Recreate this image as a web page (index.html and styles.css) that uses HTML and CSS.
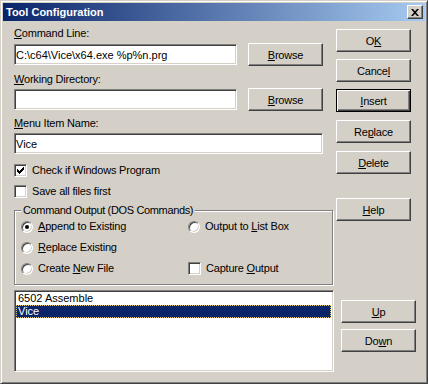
FILE: index.html
```html
<!DOCTYPE html>
<html lang="en">
<head>
    <meta charset="UTF-8">
    <title>Tool Configuration</title>
    <link rel="stylesheet" href="styles.css">
</head>
<body>
    <div class="window">
        <div class="titlebar">
            <span class="title">Tool Configuration</span>
            <button class="close-btn" title="Close">
                <svg width="8" height="7" viewBox="0 0 8 7"><path d="M0 0H2L4 2.3 6 0H8L5 3.5 8 7H6L4 4.7 2 7H0L3 3.5Z" fill="#000"/></svg>
            </button>
        </div>

        <div class="client">
            <div class="left">
                <div class="label label-first"><u>C</u>ommand Line:</div>
                <div class="field-row">
                    <input type="text" class="textbox short" value="C:\c64\Vice\x64.exe %p%n.prg">
                    <button class="btn"><u>B</u>rowse</button>
                </div>

                <div class="label label-second"><u>W</u>orking Directory:</div>
                <div class="field-row row-tight">
                    <input type="text" class="textbox short" value="">
                    <button class="btn"><u>B</u>rowse</button>
                </div>

                <div class="label label-third"><u>M</u>enu Item Name:</div>
                <input type="text" class="textbox long" value="Vice">

                <div class="check-row check-first">
                    <span class="checkbox checked">
                        <svg width="7" height="7" viewBox="0 0 7 7"><path d="M0 2H1V3H2V4H3V3H4V2H5V1H6V0H7V3H6V4H5V5H4V6H3V7H2V6H1V5H0Z" fill="#000"/></svg>
                    </span>
                    <span>Check if Windows Program</span>
                </div>
                <div class="check-row check-second">
                    <span class="checkbox"></span>
                    <span>Save all files first</span>
                </div>

                <div class="group">
                    <div class="group-title">Command Output (DOS Commands)</div>
                    <div class="group-grid">
                        <div class="option"><span class="radio on"></span><span><u>A</u>ppend to Existing</span></div>
                        <div class="option"><span class="radio"></span><span>Output to <u>L</u>ist Box</span></div>
                        <div class="option"><span class="radio"></span><span><u>R</u>eplace Existing</span></div>
                        <div class="option"></div>
                        <div class="option"><span class="radio"></span><span>Create <u>N</u>ew File</span></div>
                        <div class="option"><span class="checkbox"></span><span>Capture <u>O</u>utput</span></div>
                    </div>
                </div>

                <div class="listbox">
                    <div class="list-item">6502 Assemble</div>
                    <div class="list-item selected">Vice</div>
                </div>
            </div>

            <div class="right">
                <button class="btn btn-ok">O<u>K</u></button>
                <button class="btn btn-cancel">Cance<u>l</u></button>
                <button class="btn btn-default btn-insert"><u>I</u>nsert</button>
                <button class="btn btn-replace">Re<u>p</u>lace</button>
                <button class="btn btn-delete"><u>D</u>elete</button>
                <button class="btn btn-help"><u>H</u>elp</button>
                <button class="btn btn-up btn-shift"><u>U</u>p</button>
                <button class="btn btn-down btn-shift">Do<u>w</u>n</button>
            </div>
        </div>
    </div>
</body>
</html>
```

FILE: styles.css
```css
body {
    margin: 0;
    font-family: "Liberation Sans", Arial, sans-serif;
    font-size: 11px;
    letter-spacing: -0.2px;
    color: #000;
}

.window {
    width: 428px;
    height: 384px;
    box-sizing: border-box;
    border: 1px solid;
    border-color: #d4d0c8 #404040 #404040 #d4d0c8;
    box-shadow: inset 1px 1px #fff, inset -1px -1px #808080;
    padding: 2px;
    background-color: #d4d0c8;
}

.titlebar {
    height: 18px;
    display: flex;
    align-items: center;
    justify-content: space-between;
    padding-left: 3px;
    background: linear-gradient(to right, #0a246a, #a6caf0);
}

.title {
    color: #fff;
    font-weight: bold;
    font-size: 11px;
    line-height: 13px;
    letter-spacing: 0;
}

.close-btn {
    width: 16px;
    height: 14px;
    margin-right: 2px;
    padding: 0;
    display: flex;
    align-items: center;
    justify-content: center;
    box-sizing: border-box;
    background-color: #d4d0c8;
    border: 1px solid;
    border-color: #fff #404040 #404040 #fff;
    box-shadow: inset -1px -1px #808080;
}

.client {
    display: flex;
    padding: 0 0 0 11px;
}

.left {
    width: 320px;
    display: flex;
    flex-direction: column;
}

.right {
    margin-left: 2px;
    display: flex;
    flex-direction: column;
}

.label {
    line-height: 13px;
    height: 13px;
}

.label-first { margin-top: 6px; }
.label-second { margin-top: 7px; }
.label-third { margin-top: 6px; }

.field-row {
    display: flex;
    align-items: center;
    gap: 11px;
    margin-top: 3px;
    height: 23px;
}

.row-tight {
    margin-top: 2px;
}

.textbox {
    height: 21px;
    box-sizing: border-box;
    margin: 0;
    padding: 0 1px;
    border: 1px solid;
    border-color: #808080 #fff #fff #808080;
    box-shadow: inset 1px 1px #404040, inset -1px -1px #d4d0c8;
    background: #fff;
    font-family: inherit;
    font-size: 11px;
    letter-spacing: 0;
    color: #000;
    outline: none;
}

.textbox.short { width: 223px; }

.textbox.long {
    width: 309px;
    margin-top: 3px;
}

.btn {
    width: 75px;
    height: 23px;
    box-sizing: border-box;
    padding: 0;
    background-color: #d4d0c8;
    border: 1px solid;
    border-color: #fff #404040 #404040 #fff;
    box-shadow: inset -1px -1px #808080;
    font-family: inherit;
    font-size: 11px;
    letter-spacing: -0.2px;
    color: #000;
}

.btn-default {
    border: 1px solid #000;
    box-shadow: inset 1px 1px #fff, inset -1px -1px #404040, inset -2px -2px #808080;
}

.btn-ok { margin-top: 8px; }
.btn-cancel { margin-top: 7px; }
.btn-insert { margin-top: 7px; }
.btn-replace { margin-top: 8px; }
.btn-delete { margin-top: 8px; }
.btn-help { margin-top: 24px; }
.btn-up { margin-top: 79px; }
.btn-down { margin-top: 6px; }

.btn-shift {
    margin-left: 5px;
}

.check-row {
    display: flex;
    align-items: center;
    gap: 5px;
    height: 13px;
    line-height: 13px;
}

.check-first { margin-top: 10px; }
.check-second { margin-top: 8px; }

.checkbox {
    width: 13px;
    height: 13px;
    box-sizing: border-box;
    flex: none;
    display: inline-flex;
    align-items: center;
    justify-content: center;
    background: #fff;
    border: 1px solid;
    border-color: #808080 #fff #fff #808080;
    box-shadow: inset 1px 1px #404040, inset -1px -1px #d4d0c8;
}

.group {
    margin-top: 12px;
    width: 319px;
    height: 75px;
    box-sizing: border-box;
    border: 1px solid #808080;
    box-shadow: inset 1px 1px #fff, 1px 1px #fff;
    display: flex;
    flex-direction: column;
}

.group-title {
    align-self: flex-start;
    margin: -7px 0 0 6px;
    padding: 0 2px;
    line-height: 13px;
    letter-spacing: -0.35px;
    background-color: #d4d0c8;
}

.group-grid {
    display: grid;
    grid-template-columns: 167px 1fr;
    grid-auto-rows: 13px;
    row-gap: 8px;
    margin-top: 3px;
    padding-left: 6px;
}

.option {
    display: flex;
    align-items: center;
    gap: 5px;
    line-height: 13px;
}

.radio {
    width: 12px;
    height: 12px;
    box-sizing: border-box;
    flex: none;
    border-radius: 50%;
    border: 1px solid;
    border-color: #808080 #fff #fff #808080;
    box-shadow: inset 1px 1px #404040, inset -1px -1px #d4d0c8;
    background: #fff;
    display: inline-flex;
    align-items: center;
    justify-content: center;
}

.radio.on::after {
    content: "";
    width: 4px;
    height: 4px;
    border-radius: 50%;
    background: #000;
}

.listbox {
    margin-top: 5px;
    width: 320px;
    height: 82px;
    box-sizing: border-box;
    border: 1px solid;
    border-color: #808080 #fff #fff #808080;
    box-shadow: inset 1px 1px #404040, inset -1px -1px #d4d0c8;
    background: #fff;
    padding: 1px 2px 2px 1px;
    overflow: hidden;
}

.list-item {
    height: 13px;
    line-height: 13px;
    padding-left: 2px;
    box-sizing: border-box;
    white-space: nowrap;
    letter-spacing: 0;
}

.list-item.selected {
    background-color: #0a246a;
    color: #fff;
    border: 1px dotted #e8d070;
    padding-left: 1px;
    line-height: 11px;
}
```
